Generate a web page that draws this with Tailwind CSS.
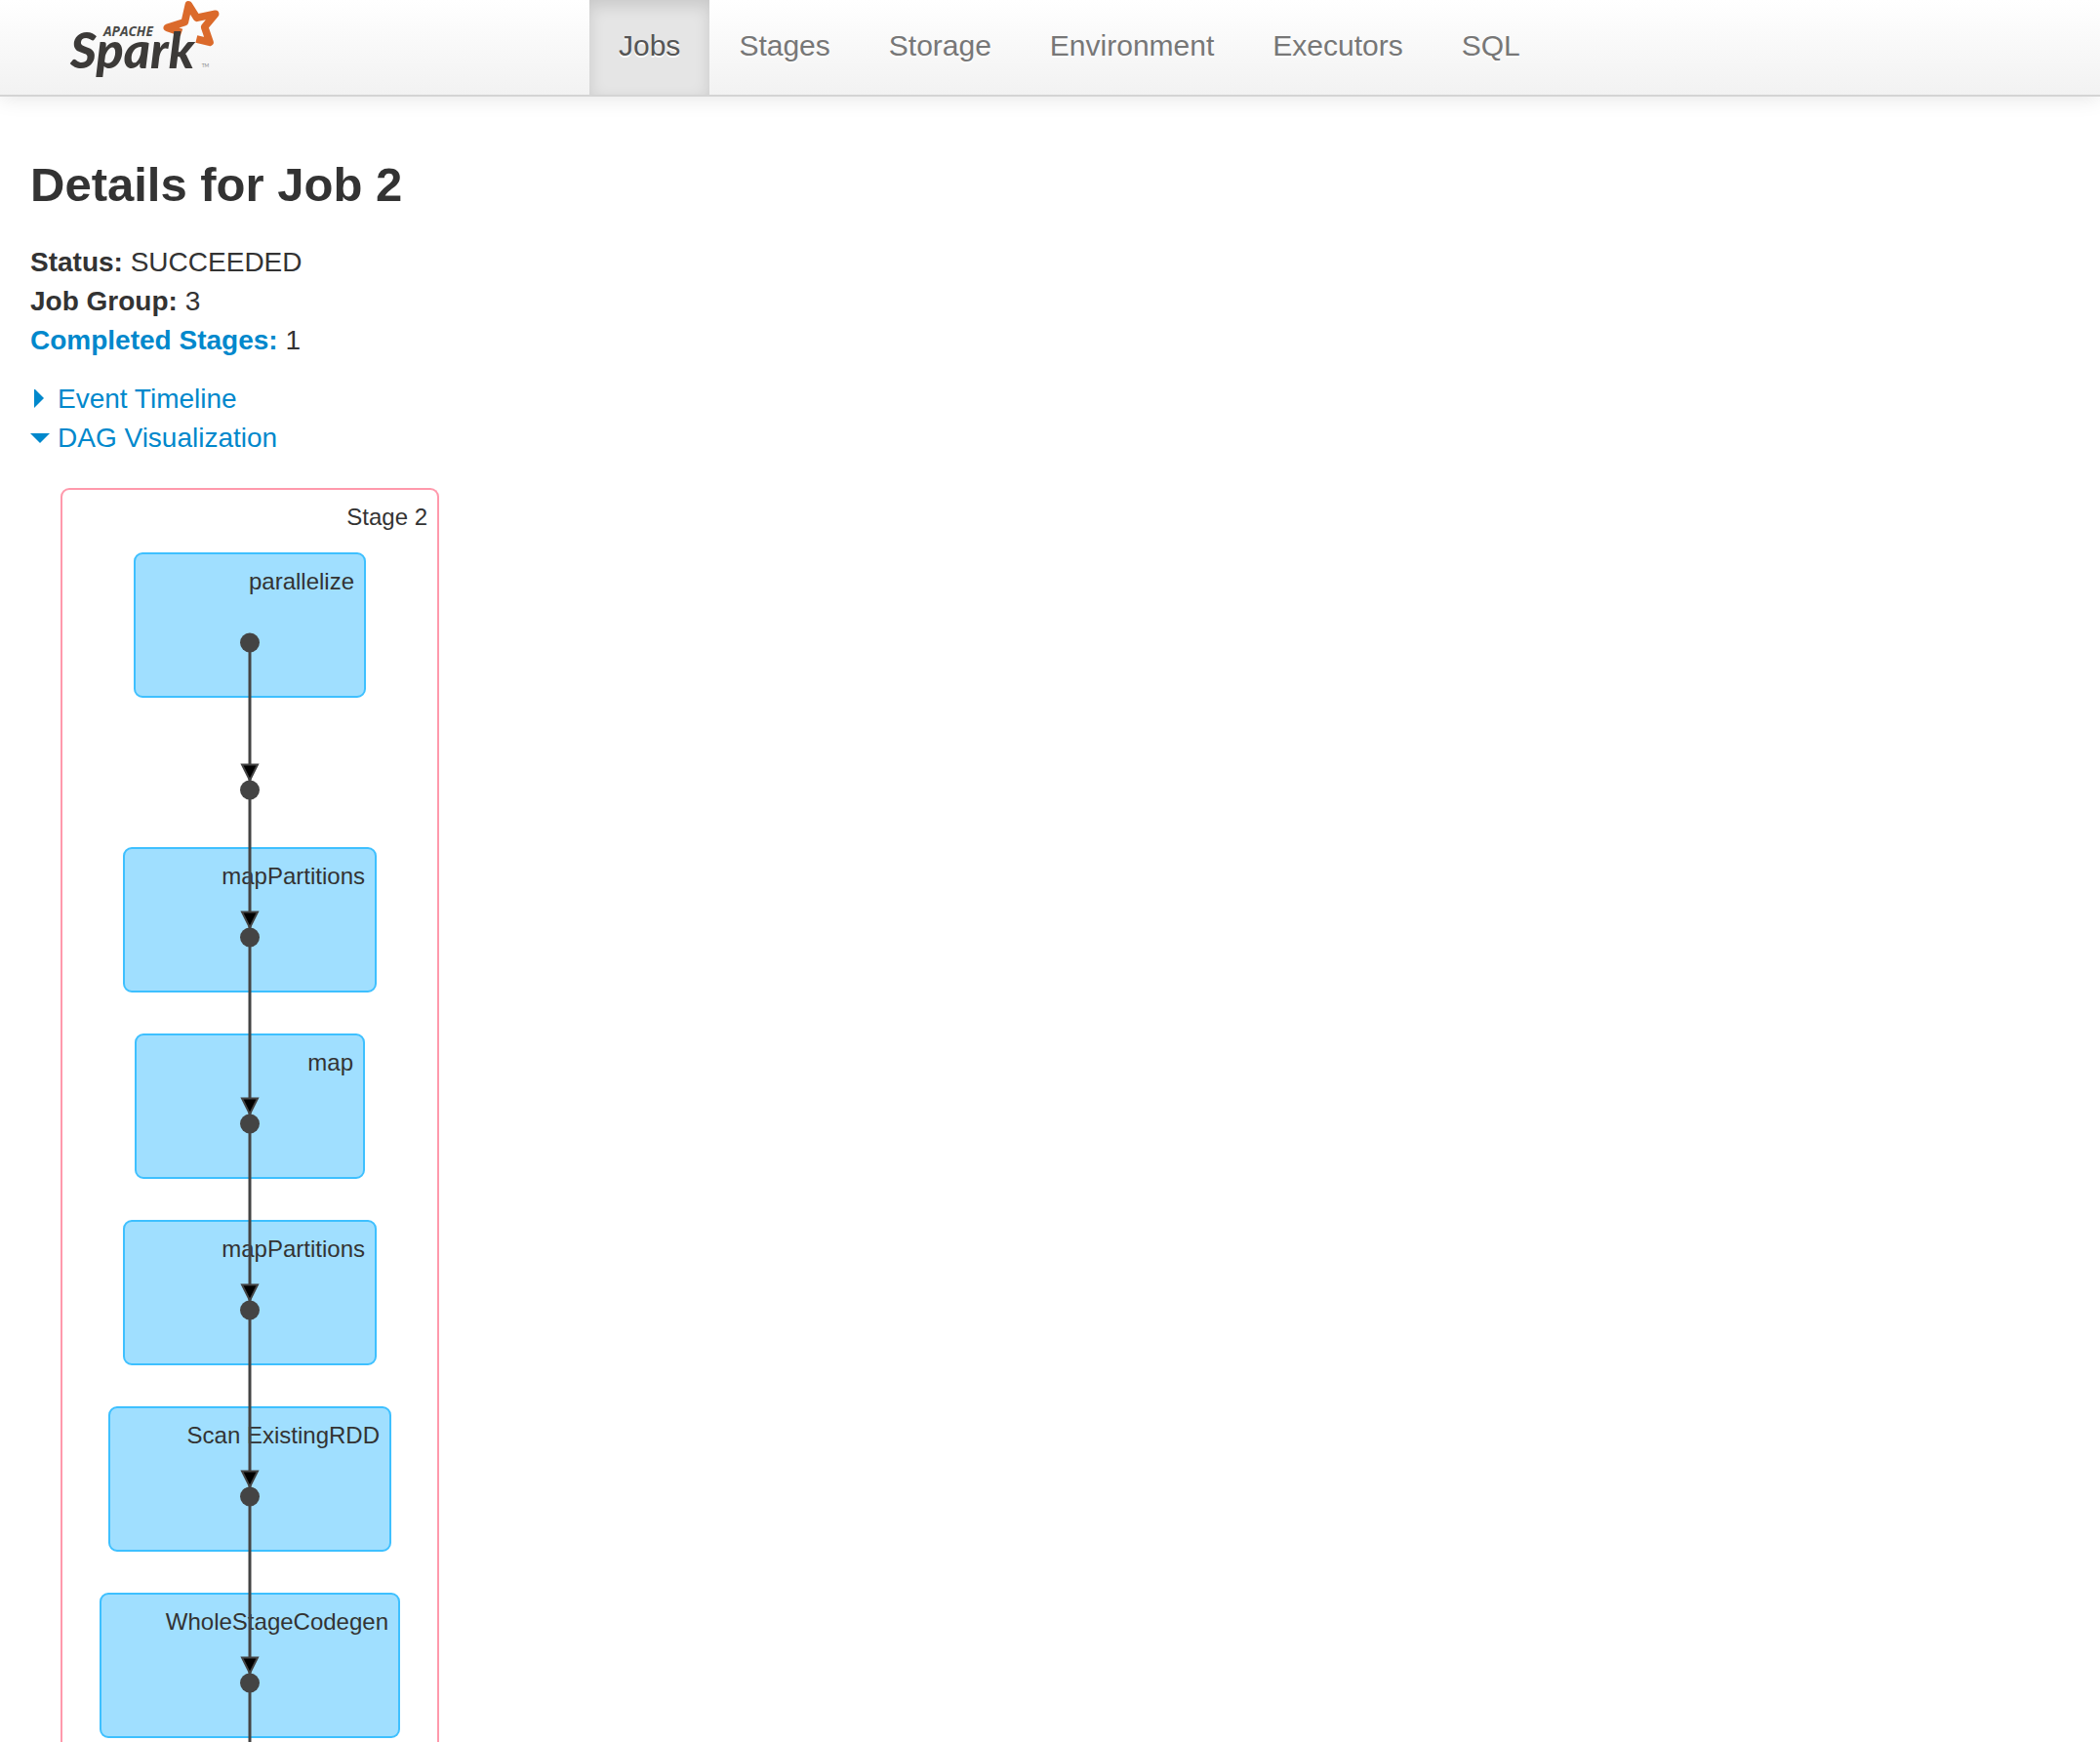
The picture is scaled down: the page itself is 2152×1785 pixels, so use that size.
<!DOCTYPE html>
<html lang="en">
<head>
<meta charset="utf-8">
<title>Spark shell - Details for Job 2</title>
<script src="https://cdn.jsdelivr.net/npm/@tailwindcss/browser@4"></script>
</head>
<body class="flex min-h-screen flex-col bg-white font-['Liberation_Sans',Arial,sans-serif] text-[28px] leading-10 text-[#333333]">

<header class="flex border-b-2 border-[#d4d4d4] bg-linear-to-b from-white to-[#f2f2f2] shadow-[0_2px_20px_rgba(0,0,0,0.1)]">
  <a href="#" aria-label="Apache Spark" class="w-[604px] shrink-0 pl-[50px]">
    <svg class="h-20 w-[200px]" viewBox="0 0 600 240" fill="none">
      <path d="M408 100 L364 85 L418 68 L430 15 L455 55 L512 43 L479 83 L495 130 L454 120" stroke="#db6a2b" stroke-width="23" stroke-linejoin="round"/>
      <text x="168" y="110" fill="#4a4a48" font-family="'Open Sans', sans-serif" font-weight="700" font-style="italic" font-size="41">APACHE</text>
      <text x="66" y="209" fill="#3c3a38" font-family="Lato, sans-serif" font-weight="900" font-style="italic" font-size="156">Spark</text>
      <text x="470" y="208" fill="#8a8a8a" font-family="Lato, sans-serif" font-size="15">TM</text>
    </svg>
  </a>
  <nav class="flex text-[30px] leading-[93px] text-[#777777] [text-shadow:0_2px_0_#ffffff]">
    <a href="#" aria-current="page" class="bg-[#e5e5e5] px-[30px] pb-1 text-[#555555] shadow-[inset_0_6px_16px_rgba(0,0,0,0.125)]">Jobs</a>
    <a href="#" class="px-[30px] pb-1">Stages</a>
    <a href="#" class="px-[30px] pb-1">Storage</a>
    <a href="#" class="px-[30px] pb-1">Environment</a>
    <a href="#" class="px-[30px] pb-1">Executors</a>
    <a href="#" class="px-[30px] pb-1">SQL</a>
  </nav>
</header>

<main class="flex grow flex-col px-[31px] pt-[50px]">
  <h1 class="mb-5 text-[49px] leading-[80px] font-bold">Details for Job 2</h1>

  <ul class="mb-5">
    <li><strong>Status:</strong> SUCCEEDED</li>
    <li><strong>Job Group:</strong> 3</li>
    <li><a href="#completed" class="font-bold text-[#0088cc]">Completed Stages:</a> 1</li>
  </ul>

  <div class="flex flex-col items-start text-[#0088cc]">
    <button type="button" aria-expanded="false" class="flex items-center gap-2">
      <svg class="size-5" viewBox="0 0 20 20" fill="currentColor"><path d="M4 -1 L14 9 L4 19 Z"/></svg>
      Event Timeline
    </button>
    <button type="button" aria-expanded="true" class="flex items-center gap-2">
      <svg class="size-5" viewBox="0 0 20 20" fill="currentColor"><path d="M0 5 H20 L10 15 Z"/></svg>
      DAG Visualization
    </button>
  </div>

  <!-- Stage cluster: its operations, with the edges drawn on top -->
  <section class="relative mt-[31px] ml-[31px] flex w-[388px] grow flex-col items-center rounded-t-[9px] border-2 border-b-0 border-[#ff99ac] pt-[14px] text-2xl leading-7">
    <h2 class="mb-[22px] self-end pr-[10px] leading-7">Stage 2</h2>
    <div class="mb-[153px] h-[149px] w-[238px] rounded-[9px] border-2 border-[#3ec0ff] bg-[#a0dfff] pt-[14px] pr-[10px] text-right leading-7">parallelize</div>
    <div class="flex flex-col items-center gap-[42px] text-right leading-7">
      <div class="h-[149px] w-[260px] rounded-[9px] border-2 border-[#3ec0ff] bg-[#a0dfff] pt-[14px] pr-[10px]">mapPartitions</div>
      <div class="h-[149px] w-[236px] rounded-[9px] border-2 border-[#3ec0ff] bg-[#a0dfff] pt-[14px] pr-[10px]">map</div>
      <div class="h-[149px] w-[260px] rounded-[9px] border-2 border-[#3ec0ff] bg-[#a0dfff] pt-[14px] pr-[10px]">mapPartitions</div>
      <div class="h-[149px] w-[290px] rounded-[9px] border-2 border-[#3ec0ff] bg-[#a0dfff] pt-[14px] pr-[10px]">Scan ExistingRDD</div>
      <div class="h-[149px] w-[308px] rounded-[9px] border-2 border-[#3ec0ff] bg-[#a0dfff] pt-[14px] pr-[10px]">WholeStageCodegen</div>
    </div>
    <svg class="absolute top-0 left-1/2 h-full w-6 -translate-x-1/2" aria-hidden="true">
      <defs>
        <g id="node">
          <path d="M-8 -26 H8 L0 -10 Z" fill="#000000" stroke="#444444" stroke-width="2"/>
          <circle r="10" fill="#444444"/>
        </g>
      </defs>
      <line x1="12" y1="157" x2="12" y2="100%" stroke="#444444" stroke-width="3"/>
      <circle cx="12" cy="156.5" r="10" fill="#444444"/>
      <use href="#node" x="12" y="307.5"/>
      <use href="#node" x="12" y="458.5"/>
      <use href="#node" x="12" y="649.5"/>
      <use href="#node" x="12" y="840.5"/>
      <use href="#node" x="12" y="1031.5"/>
      <use href="#node" x="12" y="1222.5"/>
    </svg>
  </section>
</main>
</body>
</html>
